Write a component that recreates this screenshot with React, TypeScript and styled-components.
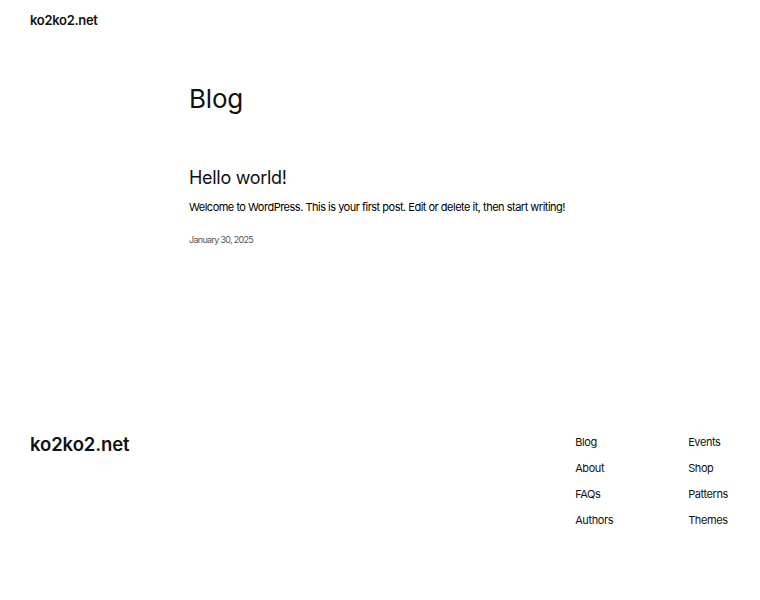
import React from "react";
import styled, { createGlobalStyle } from "styled-components";

const Global = createGlobalStyle`
  html, body { margin: 0; padding: 0; background: #fff; }
  body {
    font-family: Inter, "Noto Sans", "Liberation Sans", sans-serif;
    color: #111;
    -webkit-font-smoothing: antialiased;
  }
  * { box-sizing: border-box; }
`;

const Page = styled.div`
  width: 100%;
  display: flex;
  flex-direction: column;
`;

const Header = styled.header`
  height: 42px;
  padding: 0 30px;
  display: flex;
  align-items: center;
`;

const SiteTitle = styled.a<{ $size: number; $track: number }>`
  font-size: ${(p) => p.$size}px;
  font-weight: 600;
  letter-spacing: ${(p) => p.$track}px;
  color: #111;
  text-decoration: none;
  line-height: 1.2;
`;

const Main = styled.main`
  width: 382px;
  margin: 41px auto 0;
  display: flex;
  flex-direction: column;
`;

const PageTitle = styled.h1`
  margin: 0;
  font-size: 26px;
  font-weight: 400;
  letter-spacing: -0.2px;
  line-height: 1.2;
`;

const Post = styled.article`
  margin-top: 53px;
  display: flex;
  flex-direction: column;
`;

const PostTitle = styled.h2`
  margin: 0;
  font-size: 18px;
  font-weight: 400;
  letter-spacing: -0.3px;
  line-height: 1.2;
`;

const Excerpt = styled.p`
  margin: 10.5px 0 0;
  font-size: 11px;
  color: #000;
  letter-spacing: -0.5px;
  line-height: 1.5;
  white-space: nowrap;
`;

const PostDate = styled.time`
  margin-top: 17px;
  font-size: 9px;
  color: #555;
  letter-spacing: -0.7px;
  line-height: 1.5;
`;

const Footer = styled.footer`
  margin-top: 186.5px;
  padding: 0 30px;
  display: flex;
  justify-content: space-between;
  align-items: flex-start;
`;

const Nav = styled.nav`
  display: grid;
  grid-template-columns: 113px auto;
  grid-auto-flow: column;
  grid-template-rows: repeat(4, 18px);
  row-gap: 8px;
  margin-right: 2px;
`;

const NavLink = styled.a`
  font-size: 11px;
  letter-spacing: -0.4px;
  line-height: 18px;
  color: #111;
  text-decoration: none;
`;

const links = ["Blog", "About", "FAQs", "Authors", "Events", "Shop", "Patterns", "Themes"];

export default function App() {
  return (
    <Page>
      <Global />
      <Header>
        <SiteTitle $size={13} $track={-0.3} href="#">ko2ko2.net</SiteTitle>
      </Header>
      <Main>
        <PageTitle>Blog</PageTitle>
        <Post>
          <PostTitle>Hello world!</PostTitle>
          <Excerpt>Welcome to WordPress. This is your first post. Edit or delete it, then start writing!</Excerpt>
          <PostDate>January 30, 2025</PostDate>
        </Post>
      </Main>
      <Footer>
        <SiteTitle $size={18.5} $track={-0.1} href="#">ko2ko2.net</SiteTitle>
        <Nav>
          {links.map((l) => (
            <NavLink key={l} href="#">{l}</NavLink>
          ))}
        </Nav>
      </Footer>
    </Page>
  );
}
